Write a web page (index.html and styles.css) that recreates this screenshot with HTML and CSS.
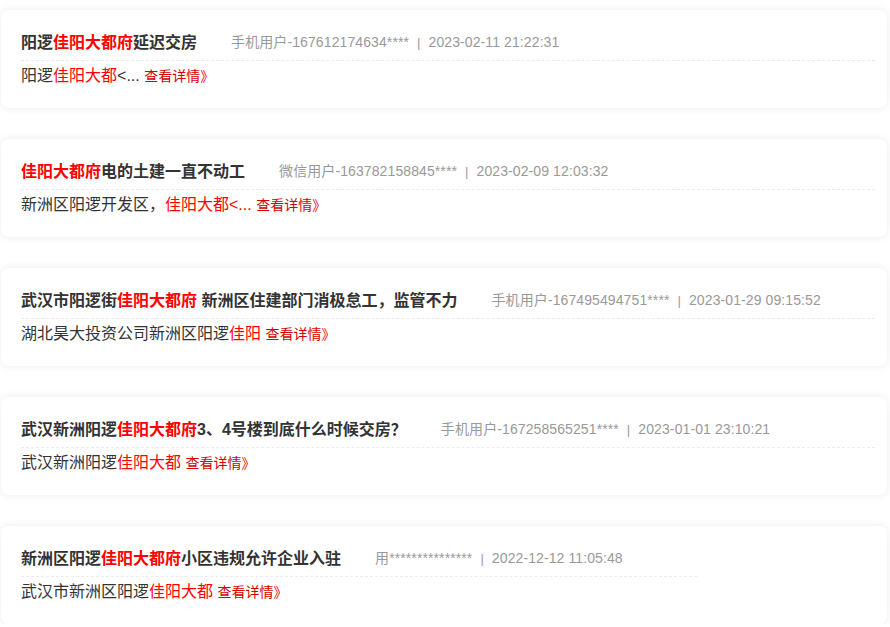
FILE: index.html
```html
<!DOCTYPE html>
<html lang="zh-CN">
<head>
    <meta charset="UTF-8">
    <meta name="viewport" content="width=device-width, initial-scale=1.0">
    <title>投诉列表</title>
    <link rel="stylesheet" href="styles.css">
</head>
<body>
    <div class="list">
        <div class="item">
            <div class="item-head">
                <span class="item-title">阳逻<em>佳阳大都府</em>延迟交房</span>
                <span class="item-meta">手机用户-167612174634****<i class="sep">|</i>2023-02-11 21:22:31</span>
            </div>
            <div class="item-body">阳逻<em>佳阳大都</em>&lt;... <a class="more" href="#">查看详情<b>》</b></a></div>
        </div>

        <div class="item">
            <div class="item-head">
                <span class="item-title"><em>佳阳大都府</em>电的土建一直不动工</span>
                <span class="item-meta">微信用户-163782158845****<i class="sep">|</i>2023-02-09 12:03:32</span>
            </div>
            <div class="item-body">新洲区阳逻开发区，<em>佳阳大都&lt;...</em> <a class="more" href="#">查看详情<b>》</b></a></div>
        </div>

        <div class="item">
            <div class="item-head">
                <span class="item-title">武汉市阳逻街<em>佳阳大都府</em> 新洲区住建部门消极怠工，监管不力</span>
                <span class="item-meta">手机用户-167495494751****<i class="sep">|</i>2023-01-29 09:15:52</span>
            </div>
            <div class="item-body">湖北昊大投资公司新洲区阳逻<em>佳阳</em> <a class="more" href="#">查看详情<b>》</b></a></div>
        </div>

        <div class="item">
            <div class="item-head">
                <span class="item-title">武汉新洲阳逻<em>佳阳大都府</em>3、4号楼到底什么时候交房？</span>
                <span class="item-meta">手机用户-167258565251****<i class="sep">|</i>2023-01-01 23:10:21</span>
            </div>
            <div class="item-body">武汉新洲阳逻<em>佳阳大都</em> <a class="more" href="#">查看详情<b>》</b></a></div>
        </div>

        <div class="item">
            <div class="item-head short">
                <span class="item-title">新洲区阳逻<em>佳阳大都府</em>小区违规允许企业入驻</span>
                <span class="item-meta">用***************<i class="sep">|</i>2022-12-12 11:05:48</span>
            </div>
            <div class="item-body">武汉市新洲区阳逻<em>佳阳大都</em> <a class="more" href="#">查看详情<b>》</b></a></div>
        </div>
    </div>
</body>
</html>
```

FILE: styles.css
```css
body {
    margin: 0;
    padding: 0;
    background-color: #fff;
    font-family: "Liberation Sans", "Noto Sans CJK SC", sans-serif;
    color: #333;
}

.list {
    display: flex;
    flex-direction: column;
    gap: 31px;
    padding: 10px 3px 0 1px;
}

.item {
    background-color: #fff;
    border-radius: 8px;
    box-shadow: 0 0 10px rgba(0, 0, 0, 0.08);
    padding: 20px 12px 20px 20px;
    height: 58px;
}

.item em {
    font-style: normal;
    color: #f00;
}

.item-head {
    display: flex;
    align-items: center;
    gap: 34px;
    line-height: 24px;
    padding-bottom: 5px;
    border-bottom: 1px dashed #ebebeb;
}

.item-head.short {
    width: 676px;
}

.item-title {
    font-size: 16px;
    font-weight: bold;
    color: #333;
}

.item-meta {
    font-size: 14px;
    letter-spacing: 0.1px;
    color: #999;
}

.sep {
    font-style: normal;
    font-size: 13px;
    margin: 0 8px;
    color: #999;
}

.item-body {
    font-size: 16px;
    line-height: 24px;
    margin-top: 3px;
    color: #333;
}

.more {
    font-size: 14px;
    color: #d40000;
    text-decoration: none;
}

.more b {
    font-weight: normal;
    color: #f00;
}
```
